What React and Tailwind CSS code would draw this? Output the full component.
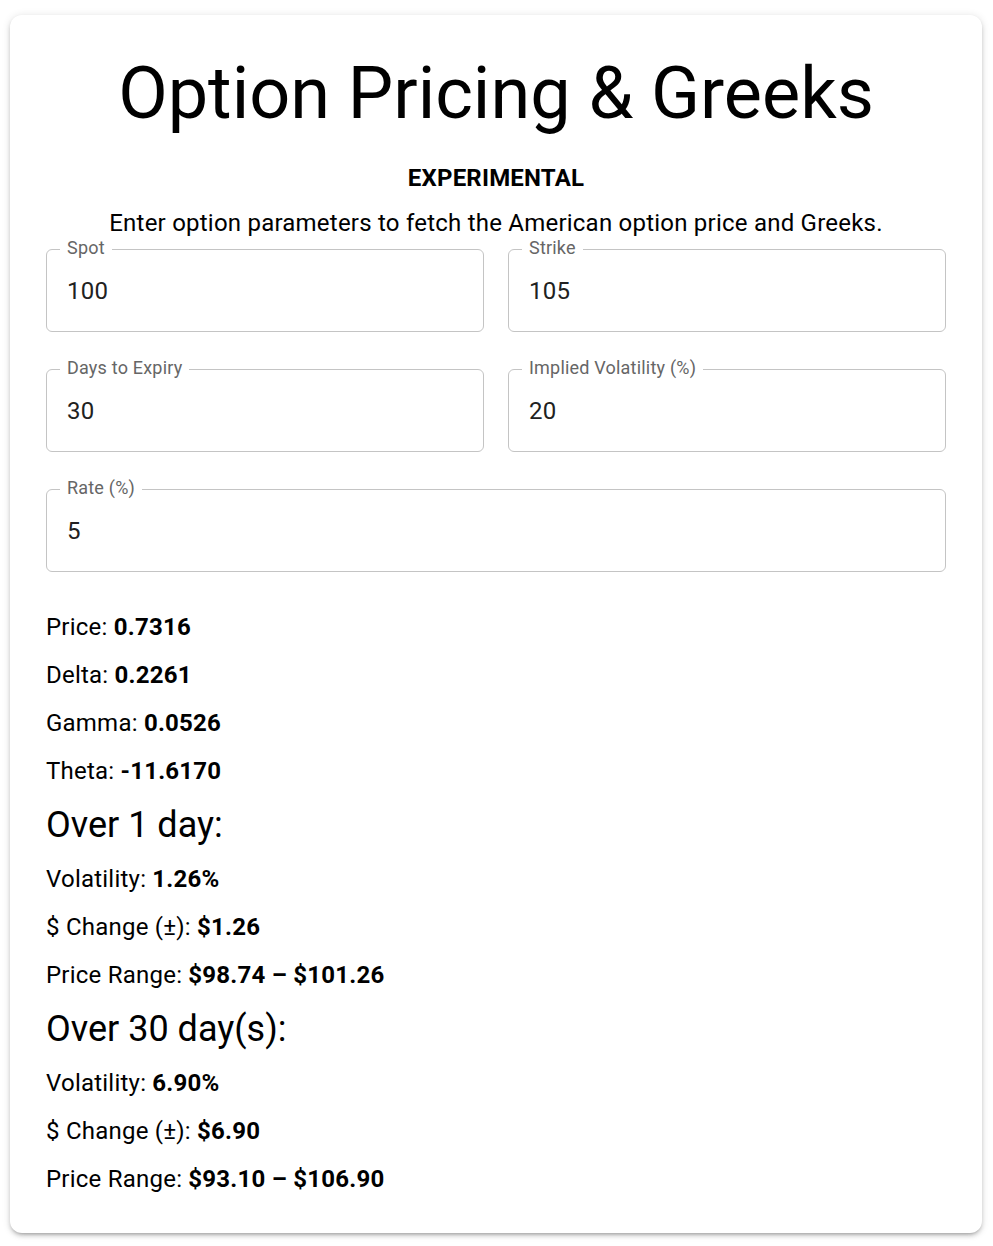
const fields = [
  [{ label: 'Spot', value: '100' }, { label: 'Strike', value: '105' }],
  [{ label: 'Days to Expiry', value: '30' }, { label: 'Implied Volatility (%)', value: '20' }],
  [{ label: 'Rate (%)', value: '5' }],
]

const greeks = [
  ['Price', '0.7316'],
  ['Delta', '0.2261'],
  ['Gamma', '0.0526'],
  ['Theta', '-11.6170'],
]

const horizons = [
  { title: 'Over 1 day:', vol: '1.26%', change: '$1.26', range: '$98.74 – $101.26' },
  { title: 'Over 30 day(s):', vol: '6.90%', change: '$6.90', range: '$93.10 – $106.90' },
]

function Field({ label, value }) {
  return (
    <div className="relative flex-1 h-[83px] border border-[#c4c4c4] rounded-[6px] flex items-center pl-[20px]">
      <span className="absolute left-[13px] top-[-14px] px-[7px] bg-white text-[18px] leading-[24px] tracking-[0.2px] text-[#666666]">{label}</span>
      <span className="text-[24px] tracking-[0.2px] text-[#212121]">{value}</span>
    </div>
  )
}

function Line({ label, value }) {
  return (
    <p className="text-[24px] leading-[48px] tracking-[0.225px] text-black">
      {label}: <b className="font-bold">{value}</b>
    </p>
  )
}

export default function App() {
  return (
    <div className="bg-white min-h-[1246px] pt-[15px]" style={{ fontFamily: 'Roboto, "Liberation Sans", sans-serif' }}>
      <div className="ml-[10px] w-[972px] bg-white rounded-[12px] px-[36px] pt-[36px] pb-[30px] shadow-[0_3px_3px_-2px_rgba(0,0,0,0.2),0_3px_4px_0_rgba(0,0,0,0.14),0_1px_8px_0_rgba(0,0,0,0.12)]">
        <h1 className="text-center text-[72px] leading-[86px] text-black">Option Pricing &amp; Greeks</h1>
        <p className="mt-[25px] text-center text-[24px] leading-[32px] tracking-[0.2px] font-bold text-black">EXPERIMENTAL</p>
        <p className="mt-[13px] text-center text-[24px] leading-[32px] tracking-[0.225px] text-black">
          Enter option parameters to fetch the American option price and Greeks.
        </p>

        <div className="mt-[10px] flex flex-col gap-[37px]">
          {fields.map((row, i) => (
            <div key={i} className="flex gap-[24px]">
              {row.map(f => <Field key={f.label} {...f} />)}
            </div>
          ))}
        </div>

        <div className="mt-[31px]">
          {greeks.map(([l, v]) => <Line key={l} label={l} value={v} />)}
          {horizons.map(h => (
            <div key={h.title}>
              <h2 className="text-[36px] leading-[60px] text-black">{h.title}</h2>
              <Line label="Volatility" value={h.vol} />
              <Line label="$ Change (±)" value={h.change} />
              <Line label="Price Range" value={h.range} />
            </div>
          ))}
        </div>
      </div>
    </div>
  )
}
